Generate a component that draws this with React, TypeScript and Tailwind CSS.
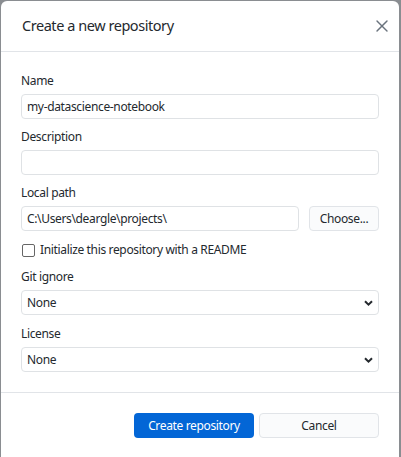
import { X } from 'lucide-react';

const font = { fontFamily: '"Noto Sans", "Segoe UI", sans-serif' };

function Label({ children }: { children: React.ReactNode }) {
    return <div className="text-[12px] leading-[16px] tracking-[-0.35px] text-[#24292e] mb-[5px]">{children}</div>;
}

function Field({ value }: { value?: string }) {
    return (
        <div className="h-[25px] flex items-center px-[5px] border border-[#dfe2e5] rounded-[4px] bg-white text-[12px] tracking-[-0.35px] text-[#24292e]">
            {value}
        </div>
    );
}

function Select({ value }: { value: string }) {
    return (
        <div className="h-[25px] flex items-center justify-between pl-[5px] pr-[4px] border border-[#dfe2e5] rounded-[4px] bg-white text-[12px] tracking-[-0.35px] text-[#24292e]">
            <span>{value}</span>
            <svg width="9" height="6" viewBox="0 0 9 6" className="mr-[1px]">
                <path d="M1 1.2 L4.5 4.6 L8 1.2" fill="none" stroke="#24292e" strokeWidth="2" />
            </svg>
        </div>
    );
}

export default function App() {
    return (
        <div className="w-[401px] h-[457px] bg-[#8a8d91] pt-[1px] pl-[1px] pr-[2px]" style={font}>
            <div className="h-full bg-white rounded-t-[6px] flex flex-col">
                {/* Header */}
                <div className="h-[51px] flex items-center justify-between pl-[21px] pr-[7px] border-b border-[#e1e4e8]">
                    <h1 className="text-[14.5px] tracking-[-0.45px] text-[#24292e]">Create a new repository</h1>
                    <X size={20} strokeWidth={1.7} className="text-[#6a737d]" />
                </div>

                {/* Body */}
                <div className="flex flex-col px-[20px] pt-[21px] gap-[10px] h-[341px] border-b border-[#e1e4e8]">
                    <div>
                        <Label>Name</Label>
                        <Field value="my-datascience-notebook" />
                    </div>
                    <div>
                        <Label>Description</Label>
                        <Field />
                    </div>
                    <div>
                        <Label>Local path</Label>
                        <div className="flex gap-[10px]">
                            <div className="flex-1">
                                <Field value="C:\Users\deargle\projects\" />
                            </div>
                            <button className="w-[70px] h-[25px] rounded-[4px] border border-[#e1e4e8] bg-[#fafbfc] text-[12px] tracking-[-0.35px] text-[#24292e]">
                                Choose...
                            </button>
                        </div>
                    </div>
                    <label className="h-[18px] flex items-center gap-[5px] text-[12px] tracking-[-0.35px] text-[#24292e]">
                        <span className="w-[13px] h-[13px] border border-[#666] rounded-[2px] bg-white ml-[1px]" />
                        Initialize this repository with a README
                    </label>
                    <div>
                        <Label>Git ignore</Label>
                        <Select value="None" />
                    </div>
                    <div className="mt-[1px]">
                        <Label>License</Label>
                        <Select value="None" />
                    </div>
                </div>

                {/* Footer */}
                <div className="flex justify-end gap-[5px] px-[20px] pt-[20px]">
                    <button className="w-[120px] h-[25px] rounded-[4px] bg-[#0366d6] text-white text-[12px] tracking-[-0.35px]">
                        Create repository
                    </button>
                    <button className="w-[120px] h-[25px] rounded-[4px] border border-[#e1e4e8] bg-[#fafbfc] text-[12px] tracking-[-0.35px] text-[#24292e]">
                        Cancel
                    </button>
                </div>
            </div>
        </div>
    );
}
